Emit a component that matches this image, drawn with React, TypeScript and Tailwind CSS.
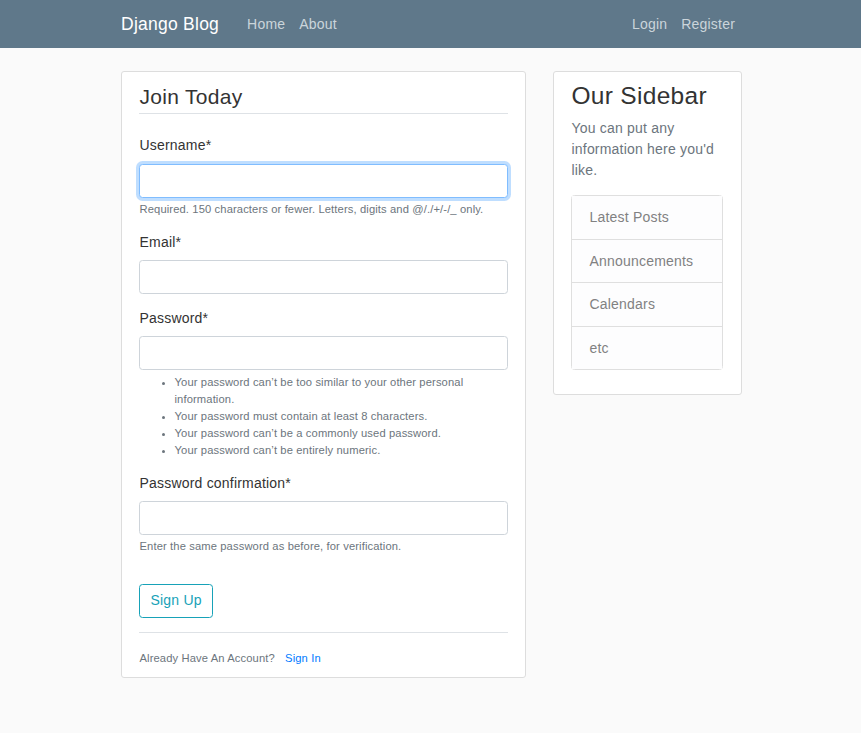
export default function App() {
    const passwordRules = [
        "Your password can’t be too similar to your other personal information.",
        "Your password must contain at least 8 characters.",
        "Your password can’t be a commonly used password.",
        "Your password can’t be entirely numeric.",
    ];
    const sidebarLinks = ["Latest Posts", "Announcements", "Calendars", "etc"];

    return (
        <div className="min-h-screen bg-[#fafafa] font-['Liberation_Sans',Arial,sans-serif] text-[14px] leading-[21px] tracking-[0.2px] text-[#333333]">
            <header className="h-[48px] bg-[#5f788a]">
                <nav className="mx-auto flex h-full w-[623px] items-center pl-[2px]">
                    <a className="mr-[21px] text-[17.5px] tracking-[0.25px] text-white">Django Blog</a>
                    <a className="px-[7px] text-[#cbd5db]">Home</a>
                    <a className="px-[7px] text-[#cbd5db]">About</a>
                    <div className="ml-auto flex">
                        <a className="px-[7px] text-[#cbd5db]">Login</a>
                        <a className="px-[7px] text-[#cbd5db]">Register</a>
                    </div>
                </nav>
            </header>

            <main className="mx-auto mt-[23px] flex w-[623px] items-start justify-between pl-[2px]">
                <section className="w-[405px] rounded-[3px] border border-[#dddddd] bg-white px-[17px] pb-[8px] pt-[9px]">
                    <form>
                        <fieldset>
                            <legend className="mb-[21px] w-full border-b border-[#dee2e6] pl-[0.5px] text-[21px] leading-[31.5px] tracking-[0.3px]">Join Today</legend>

                            <div className="mb-[14px]">
                                <label className="mb-[8px] block pl-[0.5px]">Username*</label>
                                <input
                                    type="text"
                                    className="block h-[34px] w-full rounded-[3.5px] border border-[#80bdff] bg-white px-[10.5px] shadow-[0_0_0_3px_rgba(0,123,255,0.25)] outline-none"
                                />
                                <small className="mt-[3.5px] block pl-[0.5px] text-[11.2px] leading-[16.8px] tracking-[0.12px] text-[#6c757d]">
                                    Required. 150 characters or fewer. Letters, digits and @/./+/-/_ only.
                                </small>
                            </div>

                            <div className="mb-[14px]">
                                <label className="mb-[7px] block pl-[0.5px]">Email*</label>
                                <input
                                    type="email"
                                    className="block h-[34px] w-full rounded-[3.5px] border border-[#ced4da] bg-white px-[10.5px] outline-none"
                                />
                            </div>

                            <div className="mb-[14px]">
                                <label className="mb-[7px] block pl-[0.5px]">Password*</label>
                                <input
                                    type="password"
                                    className="block h-[34px] w-full rounded-[3.5px] border border-[#ced4da] bg-white px-[10.5px] outline-none"
                                />
                                <small className="mt-[4px] block text-[11.2px] leading-[17px] tracking-[0.12px] text-[#6c757d]">
                                    <ul className="list-disc pl-[35.5px]">
                                        {passwordRules.map((rule) => (
                                            <li key={rule}>{rule}</li>
                                        ))}
                                    </ul>
                                </small>
                            </div>

                            <div className="mb-[14px]">
                                <label className="mb-[7px] block pl-[0.5px]">Password confirmation*</label>
                                <input
                                    type="password"
                                    className="block h-[34px] w-full rounded-[3.5px] border border-[#ced4da] bg-white px-[10.5px] outline-none"
                                />
                                <small className="mt-[3px] block pl-[0.5px] text-[11.2px] leading-[16.8px] tracking-[0.12px] text-[#6c757d]">
                                    Enter the same password as before, for verification.
                                </small>
                            </div>
                        </fieldset>

                        <div className="mb-[14px] mt-[15px]">
                            <button
                                type="button"
                                className="h-[34px] rounded-[3.5px] border border-[#17a2b8] px-[10.5px] text-[14px] tracking-[0.2px] text-[#17a2b8]"
                            >
                                Sign Up
                            </button>
                        </div>
                    </form>

                    <div className="border-t border-[#dee2e6] pl-[0.5px] pt-[14px]">
                        <small className="text-[11.2px] tracking-[0.12px] text-[#6c757d]">
                            Already Have An Account? <a className="ml-[7px] text-[#007bff]">Sign In</a>
                        </small>
                    </div>
                </section>

                <aside className="w-[189px] rounded-[3px] border border-[#dddddd] bg-white pb-[9px] pl-[17px] pr-[18px] pt-[9px]">
                    <h3 className="mb-[8px] pl-[0.5px] text-[24.5px] leading-[29.4px] tracking-[0.3px]">Our Sidebar</h3>
                    <p className="mb-[14px] pl-[0.5px] text-[#6c757d]">You can put any information here you'd like.</p>
                    <ul className="mb-[15px] divide-y divide-[#dfdfdf] rounded-[3.5px] border border-[#dfdfdf]">
                        {sidebarLinks.map((link) => (
                            <li key={link} className="bg-[#fdfdfe] px-[17.5px] py-[10.75px] text-[#818182]">
                                {link}
                            </li>
                        ))}
                    </ul>
                </aside>
            </main>
        </div>
    );
}
